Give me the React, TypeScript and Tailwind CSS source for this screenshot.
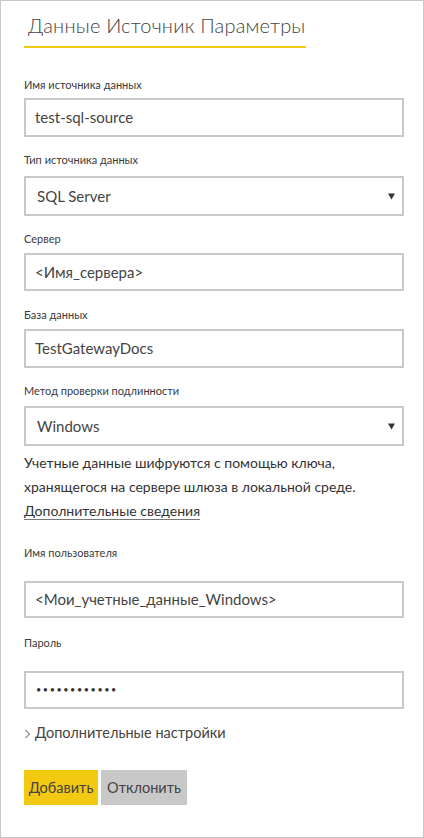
import React from 'react';

const font = { fontFamily: 'Lato, "Open Sans", sans-serif' };

const Label = ({ children, className = '' }: { children: React.ReactNode; className?: string }) => (
  <div className={`h-[14px] text-[11px] leading-[14px] text-[#3a3a3a] ${className}`}>{children}</div>
);

const Field = ({ value, className = '' }: { value: React.ReactNode; className?: string }) => (
  <div className={`border-2 border-[#c8c8c8] flex items-center px-[9px] text-[15px] text-[#444] ${className}`}>{value}</div>
);

const Select = ({ value, className = '' }: { value: string; className?: string }) => (
  <div className={`h-[40px] border-2 border-[#c8c8c8] flex items-center justify-between pl-[11px] pr-[7px] text-[15px] text-[#444] ${className}`}>
    <span>{value}</span>
    <svg width="7" height="7" viewBox="0 0 7 7"><path d="M0 0.5h7L3.5 6.5z" fill="#333" /></svg>
  </div>
);

export default function App() {
  return (
    <div style={font} className="w-[424px] h-[838px] bg-white border border-[#c8c8c8] pl-[23px] pr-[19px]">
      <div className="w-[282px] whitespace-nowrap border-b-2 border-[#f2c811] pt-[11px] pb-[7px] pl-[4px] text-[20px] leading-[27px] font-light tracking-[0.2px] text-[#444]">
        Данные Источник Параметры
      </div>

      <Label className="mt-[30px]">Имя источника данных</Label>
      <Field value="test-sql-source" className="mt-[6px] h-[39px]" />

      <Label className="mt-[16px]">Тип источника данных</Label>
      <Select value="SQL Server" className="mt-[9px]" />

      <Label className="mt-[16px]">Сервер</Label>
      <Field value="<Имя_сервера>" className="mt-[7px] h-[38px]" />

      <Label className="mt-[17px]">База данных</Label>
      <Field value="TestGatewayDocs" className="mt-[7px] h-[39px]" />

      <Label className="mt-[16px]">Метод проверки подлинности</Label>
      <Select value="Windows" className="mt-[8px]" />

      <div className="mt-[5px] text-[14px] leading-[24px] text-[#333]">
        <div>Учетные данные шифруются с помощью ключа,</div>
        <div>хранящегося на сервере шлюза в локальной среде.</div>
        <div><span className="underline underline-offset-[3px] decoration-[#777]">Дополнительные сведения</span></div>
      </div>

      <Label className="mt-[23px]">Имя пользователя</Label>
      <Field value="<Мои_учетные_данные_Windows>" className="mt-[21px] h-[37px]" />

      <Label className="mt-[18px]">Пароль</Label>
      <Field
        value={<span className="text-[9px] tracking-[1.6px] pl-[1px] text-[#333]">••••••••••••</span>}
        className="mt-[21px] h-[38px]"
      />

      <div className="mt-[14px] h-[20px] flex items-center text-[14.5px] text-[#444]">
        <svg width="8" height="12" viewBox="0 0 8 12" className="mr-[3px] mt-[1px]"><path d="M1.5 2l4 4-4 4" fill="none" stroke="#444" strokeWidth="1" /></svg>
        <span>Дополнительные настройки</span>
      </div>

      <div className="mt-[27px] flex gap-[3px]">
        <div className="h-[35px] w-[74px] bg-[#f2c811] flex items-center justify-center text-[14.5px] text-[#444]">Добавить</div>
        <div className="h-[35px] w-[86px] bg-[#c8c8c8] flex items-center justify-center text-[14.5px] text-[#444]">Отклонить</div>
      </div>
    </div>
  );
}
